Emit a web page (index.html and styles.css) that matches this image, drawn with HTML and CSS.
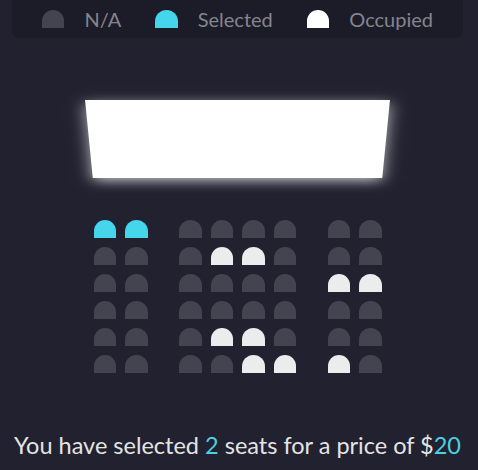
FILE: index.html
```html
<!DOCTYPE html>
<html lang="en">
<head>
  <meta charset="UTF-8">
  <title>Movie Seat Booking</title>
  <link rel="stylesheet" href="styles.css">
</head>
<body>
  <ul class="showcase">
    <li><div class="seat"></div><small>N/A</small></li>
    <li><div class="seat selected"></div><small>Selected</small></li>
    <li><div class="seat occupied"></div><small>Occupied</small></li>
  </ul>

  <div class="container">
    <div class="screen"></div>

    <div class="row">
      <div class="seat selected"></div><div class="seat selected"></div>
      <div class="seat"></div><div class="seat"></div><div class="seat"></div><div class="seat"></div>
      <div class="seat"></div><div class="seat"></div>
    </div>
    <div class="row">
      <div class="seat"></div><div class="seat"></div>
      <div class="seat"></div><div class="seat occupied"></div><div class="seat occupied"></div><div class="seat"></div>
      <div class="seat"></div><div class="seat"></div>
    </div>
    <div class="row">
      <div class="seat"></div><div class="seat"></div>
      <div class="seat"></div><div class="seat"></div><div class="seat"></div><div class="seat"></div>
      <div class="seat occupied"></div><div class="seat occupied"></div>
    </div>
    <div class="row">
      <div class="seat"></div><div class="seat"></div>
      <div class="seat"></div><div class="seat"></div><div class="seat"></div><div class="seat"></div>
      <div class="seat"></div><div class="seat"></div>
    </div>
    <div class="row">
      <div class="seat"></div><div class="seat"></div>
      <div class="seat"></div><div class="seat occupied"></div><div class="seat occupied"></div><div class="seat"></div>
      <div class="seat"></div><div class="seat"></div>
    </div>
    <div class="row">
      <div class="seat"></div><div class="seat"></div>
      <div class="seat"></div><div class="seat"></div><div class="seat occupied"></div><div class="seat occupied"></div>
      <div class="seat occupied"></div><div class="seat"></div>
    </div>
  </div>

  <p class="text">
    You have selected <span id="count">2</span> seats for a price of $<span id="total">20</span>
  </p>
</body>
</html>
```

FILE: styles.css
```css
* {
  box-sizing: border-box;
}

body {
  background-color: #212130;
  color: #e4e4e4;
  font-family: 'Lato', sans-serif;
  display: flex;
  flex-direction: column;
  align-items: center;
  margin: 0;
  padding-right: 3px;
  height: 100vh;
}

.seat {
  background-color: #444451;
  height: 18px;
  width: 22.5px;
  margin: 4.5px;
  border-top-left-radius: 15px;
  border-top-right-radius: 15px;
}

.seat.selected {
  background-color: #45d6ec;
}

.seat.occupied {
  background-color: #ececec;
}

.row .seat:nth-of-type(2) {
  margin-right: 27px;
}

.row .seat:nth-last-of-type(2) {
  margin-left: 27px;
}

.showcase {
  background: #1c1c28;
  width: 451px;
  height: 38px;
  padding: 0;
  margin: 0;
  border-radius: 0 0 7px 7px;
  color: #858590;
  list-style-type: none;
  display: flex;
  justify-content: center;
  gap: 34px;
}

.showcase li {
  display: flex;
  align-items: center;
}

.showcase .seat {
  margin: 0 20px 0 0;
}

.showcase .seat.occupied {
  background-color: #fff;
}

.showcase li small {
  font-size: 20px;
}

.container {
  margin-top: 47px;
  margin-bottom: 46px;
}

.screen {
  background-color: #fff;
  height: 110px;
  width: 100%;
  margin: 0 0 20.5px;
  transform: perspective(1500px) rotateX(-45deg);
  box-shadow: 0 4.5px 16px rgba(255, 255, 255, 0.7);
}

.row {
  display: flex;
}

p.text {
  font-size: 23.5px;
  margin: 7px 0;
}

p.text span {
  color: #4fd0e0;
}
```
